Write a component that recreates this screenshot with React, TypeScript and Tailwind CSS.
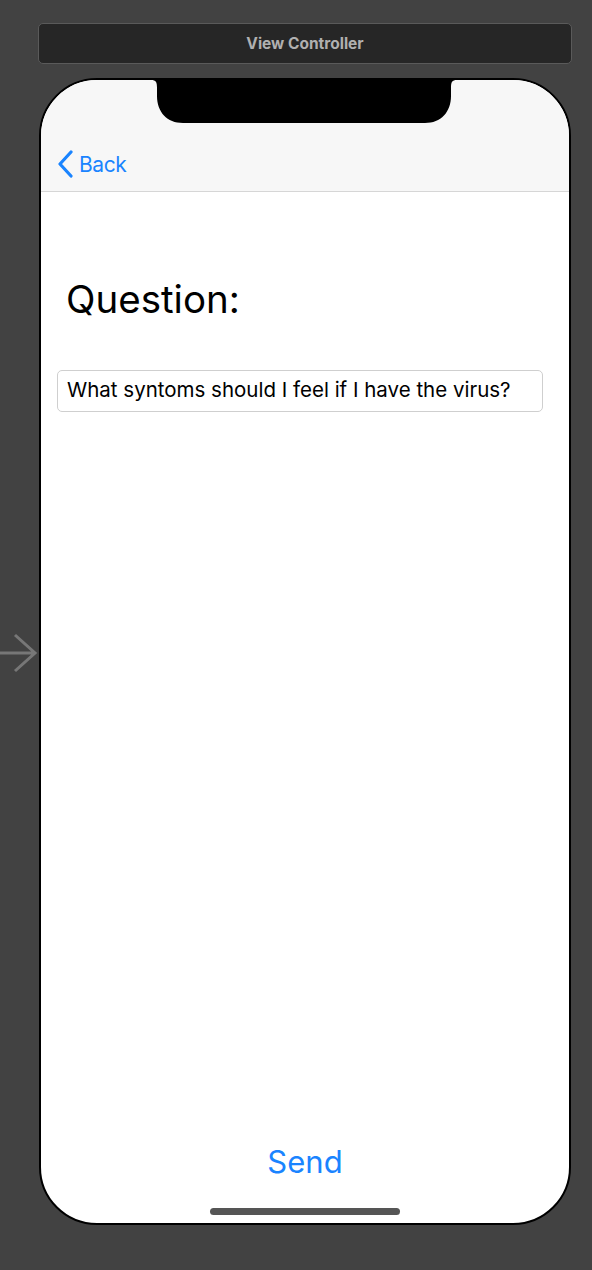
export default function App() {
  return (
    <div className="relative w-[592px] h-[1270px] bg-[#424242] overflow-hidden" style={{ fontFamily: "Inter, 'Liberation Sans', sans-serif" }}>
      {/* scene title bar */}
      <div className="pt-[23px] px-[38px]">
        <div className="h-[41px] w-[534px] rounded-[5px] border border-[#5a5a5a] bg-[#262626] flex items-center justify-center">
          <span className="text-[15.5px] font-bold text-[#b0b0b0]">View Controller</span>
        </div>
      </div>

      {/* entry arrow */}
      <svg className="absolute left-0 top-[632px]" width="38" height="42" viewBox="0 0 38 42" fill="none">
        <path d="M0 21 H35 M15 3 L35 21 L15 39" stroke="#777777" strokeWidth="3" />
      </svg>

      {/* device */}
      <div className="ml-[39px] mt-[14px] w-[532px] h-[1147px] rounded-[58px] border-2 border-black bg-white overflow-hidden relative flex flex-col">
        {/* notch */}
        <svg className="absolute left-[110px] top-0" width="306" height="44" viewBox="0 0 306 44">
          <path d="M0 0 H306 C301 0 300 2 300 8 V16 C300 32 290 43 274 43 H32 C16 43 6 32 6 16 V8 C6 2 5 0 0 0 Z" fill="#000" />
        </svg>

        <div className="h-[112px] shrink-0 bg-[#f7f7f7] border-b border-[#d6d6d6] flex items-end pb-[13px] pl-[16px]">
          <div className="flex items-center text-[#1a84ff]">
            <svg width="17" height="28" viewBox="0 0 17 28" fill="none">
              <path d="M14 2 L3 14 L14 26" stroke="#1a84ff" strokeWidth="3.2" strokeLinecap="round" strokeLinejoin="round" />
            </svg>
            <span className="text-[21px] leading-none ml-[5px] tracking-[-0.4px]">Back</span>
          </div>
        </div>

        <div className="flex-1 flex flex-col pl-[16px] pr-[26px]">
          <h1 className="mt-[88px] ml-[9px] text-[38.5px] leading-none text-black">Question:</h1>
          <div className="mt-[51px] h-[42px] rounded-[5px] border border-[#cfcfcf] flex items-center px-[9px]">
            <span className="text-[20.5px] text-black">What syntoms should I feel if I have the virus?</span>
          </div>
          <div className="flex-1" />
        </div>

        <div className="flex justify-center pb-[46px]">
          <span className="text-[31px] leading-none text-[#1a84ff]">Send</span>
        </div>

        {/* home indicator */}
        <div className="absolute bottom-[8px] left-[169px] w-[190px] h-[7px] rounded-full bg-[#555555]" />
      </div>
    </div>
  );
}
